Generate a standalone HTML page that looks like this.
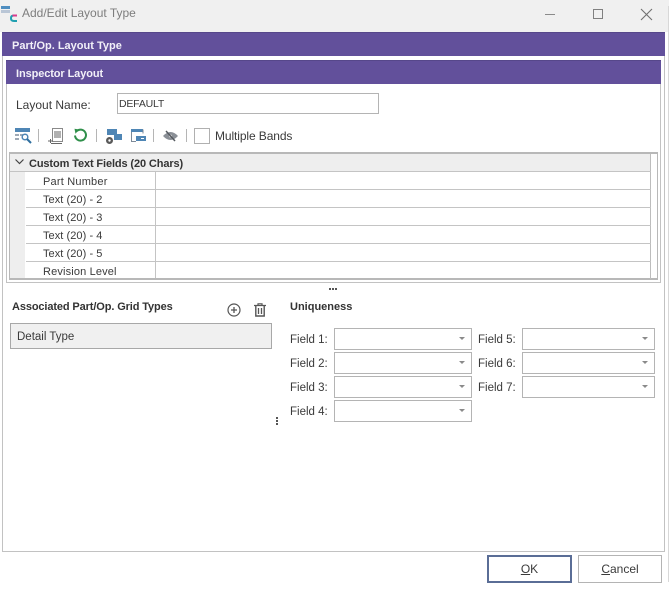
<!DOCTYPE html>
<html><head><meta charset="utf-8">
<style>
html,body{margin:0;padding:0;background:#fff}
#w{position:relative;width:669px;height:589px;overflow:hidden;background:#fff;font-family:"Liberation Sans",sans-serif;font-size:11.5px;color:#3a3a3a}
#w div,#w span.a,#w svg{position:absolute}
.t{white-space:nowrap;line-height:14px}
.g{font-size:11px;letter-spacing:.06px}
.b{font-weight:bold;color:#333;font-size:11px;letter-spacing:-.12px}
.bar{background:#62509b;border-top:1px solid #56478a;box-sizing:border-box;color:#f2f0f8;font-weight:bold;font-size:11px;white-space:nowrap;line-height:14px}
.hl{height:1px;background:#c4c4c4;left:26px;width:625px}
.c{width:138px;height:22px;left:334px;box-sizing:border-box;border:1px solid #b4b4b4;background:#fff}
.c2{left:522px;width:133px}
.c i{position:absolute;right:6px;top:8px;width:0;height:0;border-left:3.5px solid transparent;border-right:3.5px solid transparent;border-top:3.5px solid #8a8a8a}
.s{width:1px;height:13px;background:#b5b5b5;top:129px}
</style></head><body>
<div id="w">
<div style="left:0;top:0;width:669px;height:32px;background:#f0f0f0"></div>
<svg style="left:0;top:0" width="20" height="24" viewBox="0 0 20 24"><rect x="1" y="6" width="9" height="3" fill="#4f8ec0"/><rect x="1" y="10" width="9" height="3" fill="#b9c6d6"/><path d="M17 15.500h-3q-3 0-3 2.500v.5q0 2.500 3 2.500h3" fill="none" stroke="#1f9fb0" stroke-width="2"/><path d="M17 15.500h-4.500" stroke="#d93a8c" stroke-width="2"/></svg>
<div class="t" style="left:22px;top:6px;color:#7d7d7d;font-size:12px">Add/Edit Layout Type</div>
<div style="left:545px;top:14px;width:10px;height:1px;background:#8a8a8a"></div>
<div style="left:593px;top:9px;width:10px;height:10px;box-sizing:border-box;border:1px solid #808080"></div>
<svg style="left:640px;top:8px" width="13" height="13" viewBox="0 0 13 13"><path d="M1 1L12 12M12 1L1 12" stroke="#707070" stroke-width="1.1"/></svg>

<div style="left:2px;top:32px;width:663px;height:520px;box-sizing:border-box;border:1px solid #c2c2c2;border-top:0"></div>
<div style="left:668px;top:6px;width:1px;height:576px;background:#d8d8d8"></div>
<div class="bar" style="left:2px;top:32px;width:663px;height:24px;padding:6px 0 0 10px">Part/Op. Layout Type</div>
<div style="left:6px;top:60px;width:655px;height:223px;box-sizing:border-box;border:1px solid #c2c2c2"></div>
<div class="bar" style="left:6px;top:60px;width:655px;height:24px;padding:6px 0 0 10px;letter-spacing:-.1px">Inspector Layout</div>

<div class="t" style="left:16px;top:98px;font-size:12px">Layout Name:</div>
<div style="left:117px;top:93px;width:262px;height:21px;box-sizing:border-box;border:1px solid #b4b4b4"></div>
<div class="t" style="left:119px;top:97px;font-size:10.5px;letter-spacing:-.2px">DEFAULT</div>

<!-- toolbar -->
<svg style="left:15px;top:128px" width="17" height="17" viewBox="0 0 17 17"><rect x="0" y="0" width="15" height="4" fill="#4f86b5"/><path d="M0 6h4v2H0zM0 10h4v2H0zM5 6h3v2H5z" fill="#9fa9b5"/><circle cx="10" cy="9" r="2.800" fill="none" stroke="#4f86b5" stroke-width="1.500"/><path d="M12 11l4 4" stroke="#2f6f9f" stroke-width="2"/></svg>
<div class="s" style="left:38px"></div>
<svg style="left:48px;top:128px" width="16" height="17" viewBox="0 0 16 17"><rect x="4.500" y=".5" width="10" height="13" fill="#fff" stroke="#8a8a8a"/><rect x="6" y="3" width="7" height="7" fill="#b0b0b0"/><path d="M3 15.500h11M0 13h5M2.500 11v4" stroke="#666" fill="none"/></svg>
<svg style="left:73px;top:128px" width="15" height="15" viewBox="0 0 15 15"><path d="M3.600 3.200A5.500 5.500 0 1 1 2 7.500" fill="none" stroke="#2f8f4a" stroke-width="2"/><path d="M1.500 .8L6 1.500 2.500 5.800z" fill="#2f8f4a"/></svg>
<div class="s" style="left:96px"></div>
<svg style="left:105px;top:128px" width="17" height="17" viewBox="0 0 17 17"><rect x="2" y="1" width="10" height="6" fill="#4f86b5"/><rect x="9" y="6" width="8" height="6" fill="#4f86b5"/><circle cx="4.500" cy="12.500" r="3.500" fill="#5a5a5a"/><circle cx="4.500" cy="12.500" r="1.200" fill="#fff"/></svg>
<svg style="left:130px;top:128px" width="17" height="16" viewBox="0 0 17 16"><rect x="1" y="1" width="12" height="3" fill="#4f86b5"/><path d="M1.500 4v9.500H6M13 1.500v4" stroke="#7d8a98" fill="none"/><rect x="6" y="8" width="10" height="5" fill="#4f86b5"/><rect x="11" y="10" width="3" height="1" fill="#fff"/></svg>
<div class="s" style="left:153px"></div>
<svg style="left:163px;top:130px" width="15" height="12" viewBox="0 0 15 12"><path d="M0 6Q7.500-2 15 6 7.500 14 0 6z" fill="#8a8f96"/><circle cx="7.500" cy="6" r="1.500" fill="#d8d8d8"/><path d="M3 1l9 10" stroke="#55595f" stroke-width="1.500"/></svg>
<div class="s" style="left:186px"></div>
<div style="left:194px;top:128px;width:16px;height:16px;box-sizing:border-box;border:1px solid #b0b0b0"></div>
<div class="t" style="left:215px;top:129px;font-size:12px;letter-spacing:-.1px">Multiple Bands</div>

<!-- grid -->
<div style="left:9px;top:152px;width:649px;height:128px;box-sizing:border-box;border:1px solid #b8b8b8;border-top-width:2px;border-bottom-width:2px"></div>
<div style="left:10px;top:154px;width:641px;height:18px;background:#eeeeee"></div>
<div style="left:10px;top:172px;width:15px;height:106px;background:#eeeeee"></div>
<div style="left:650px;top:154px;width:1px;height:125px;background:#bdbdbd"></div>
<div style="left:155px;top:172px;width:1px;height:106px;background:#c4c4c4"></div>
<div class="hl" style="top:171px;left:10px;width:641px"></div>
<div class="hl" style="top:189px"></div>
<div class="hl" style="top:207px"></div>
<div class="hl" style="top:225px"></div>
<div class="hl" style="top:243px"></div>
<div class="hl" style="top:261px"></div>
<svg style="left:15px;top:159px" width="9" height="6" viewBox="0 0 9 6"><path d="M.5.500L4.500 4.500 8.500.500" fill="none" stroke="#444" stroke-width="1.200"/></svg>
<div class="t b" style="left:29px;top:157px">Custom Text Fields (20 Chars)</div>
<div class="t g" style="left:43px;top:175px;letter-spacing:.2px">Part Number</div>
<div class="t g" style="left:43px;top:193px">Text (20) - 2</div>
<div class="t g" style="left:43px;top:211px">Text (20) - 3</div>
<div class="t g" style="left:43px;top:229px">Text (20) - 4</div>
<div class="t g" style="left:43px;top:247px">Text (20) - 5</div>
<div class="t g" style="left:43px;top:265px;letter-spacing:.15px">Revision Level</div>

<!-- splitters -->
<div style="left:329px;top:288px;width:2px;height:2px;background:#555;box-shadow:3px 0 0 #555,6px 0 0 #555"></div>
<div style="left:276px;top:417px;width:2px;height:2px;background:#555;box-shadow:0 3px 0 #555,0 6px 0 #555"></div>

<!-- left panel -->
<div class="t b" style="left:12px;top:300px">Associated Part/Op. Grid Types</div>
<svg style="left:227px;top:303px" width="14" height="14" viewBox="0 0 14 14"><circle cx="7" cy="7" r="6" fill="none" stroke="#555" stroke-width="1.200"/><path d="M4 7h6M7 4v6" stroke="#555" stroke-width="1.300"/></svg>
<svg style="left:254px;top:303px" width="12" height="14" viewBox="0 0 12 14"><path d="M0 2.500h12M4 2.500V.8h4v1.700" fill="none" stroke="#555" stroke-width="1.200"/><path d="M1.800 3v10h8.400V3" fill="none" stroke="#555" stroke-width="1.400"/><path d="M4.500 5v6M7.500 5v6" stroke="#555" stroke-width="1.300"/></svg>
<div style="left:10px;top:323px;width:262px;height:26px;box-sizing:border-box;border:1px solid #a8a8a8;background:#f0f0f0"></div>
<div class="t" style="left:17px;top:330px">Detail Type</div>

<!-- uniqueness -->
<div class="t b" style="left:290px;top:300px;letter-spacing:0">Uniqueness</div>
<div class="t" style="left:290px;top:333px">Field 1:</div><div class="c" style="top:328px"><i></i></div>
<div class="t" style="left:290px;top:357px">Field 2:</div><div class="c" style="top:352px"><i></i></div>
<div class="t" style="left:290px;top:381px">Field 3:</div><div class="c" style="top:376px"><i></i></div>
<div class="t" style="left:290px;top:405px">Field 4:</div><div class="c" style="top:400px"><i></i></div>
<div class="t" style="left:478px;top:333px">Field 5:</div><div class="c c2" style="top:328px"><i></i></div>
<div class="t" style="left:478px;top:357px">Field 6:</div><div class="c c2" style="top:352px"><i></i></div>
<div class="t" style="left:478px;top:381px">Field 7:</div><div class="c c2" style="top:376px"><i></i></div>

<!-- footer -->
<div style="left:487px;top:555px;width:85px;height:28px;box-sizing:border-box;border:2px solid #5a6d96;text-align:center;line-height:25px;font-size:12px"><u>O</u>K</div>
<div style="left:578px;top:555px;width:84px;height:28px;box-sizing:border-box;border:1px solid #b4b4b4;text-align:center;line-height:26px;font-size:12px"><u>C</u>ancel</div>
</div>
</body></html>
